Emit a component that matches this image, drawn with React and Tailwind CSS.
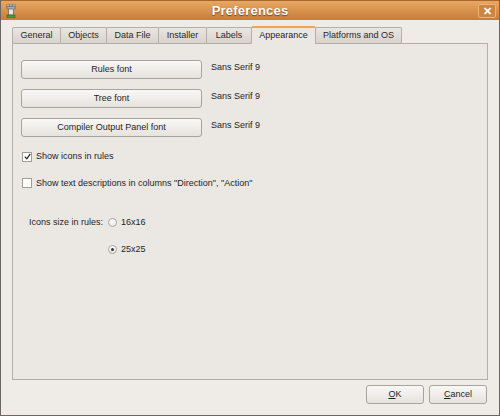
import React from "react";

const tabs = [
  { label: "General", w: "w-[49px]" },
  { label: "Objects", w: "w-[47px]" },
  { label: "Data File", w: "w-[53px]" },
  { label: "Installer", w: "w-[49px]" },
  { label: "Labels", w: "w-[46px]" },
  { label: "Appearance", w: "w-[65px]", active: true },
  { label: "Platforms and OS", w: "w-[87px]" },
];

const fontRows = ["Rules font", "Tree font", "Compiler Output Panel font"];

function Tower() {
  return (
    <svg width="10" height="14" viewBox="0 0 10 14">
      <rect x="1" y="0" width="2" height="3" fill="#d8d8d8" stroke="#555" strokeWidth="0.6" />
      <rect x="4" y="0" width="2" height="3" fill="#d8d8d8" stroke="#555" strokeWidth="0.6" />
      <rect x="7" y="0" width="2" height="3" fill="#d8d8d8" stroke="#555" strokeWidth="0.6" />
      <rect x="1" y="3" width="8" height="2" fill="#cfcfcf" stroke="#555" strokeWidth="0.6" />
      <rect x="2.5" y="5" width="5" height="6" fill="#e4e4e4" stroke="#555" strokeWidth="0.6" />
      <rect x="1" y="11" width="8" height="3" fill="#4e9a3a" stroke="#2f5e22" strokeWidth="0.6" />
    </svg>
  );
}

function Btn({ children, className = "" }) {
  return (
    <button
      className={`h-[19px] rounded-[3px] border border-[#a8a39d] bg-gradient-to-b from-[#f9f8f6] to-[#e6e2dd] text-[9px] text-[#1e1e1e] ${className}`}
    >
      {children}
    </button>
  );
}

export default function App() {
  return (
    <div
      className="w-[500px] h-[416px] flex flex-col bg-[#efebe7] border-x border-b border-[#6b6661] overflow-hidden"
      style={{ fontFamily: '"Liberation Sans", Arial, sans-serif' }}
    >
      {/* title bar */}
      <div className="h-[20px] shrink-0 relative flex items-center justify-center bg-gradient-to-b from-[#e7a864] to-[#c97c36] border-t border-[#a9662a]">
        <div className="absolute left-[5px] top-[3px]">
          <Tower />
        </div>
        <span className="text-[13px] font-bold text-white tracking-[0.2px] [text-shadow:0_1px_1px_#7a4414]">
          Preferences
        </span>
        <div className="absolute right-[3px] top-[3px] w-[18px] h-[14px] rounded-[2px] border border-[#e9b47c] bg-[#cf853f] flex items-center justify-center">
          <span className="text-[11px] font-bold text-white leading-none">✕</span>
        </div>
      </div>

      {/* body */}
      <div className="flex-1 flex flex-col px-[11px]">
        {/* tabs */}
        <div className="flex items-end h-[23px] pt-[6px]">
          {tabs.map((t) =>
            t.active ? (
              <div
                key={t.label}
                className={`${t.w} h-[18px] -mb-px -mr-px relative z-10 flex items-center justify-center bg-[#ebe7e3] border-x border-[#b3aea8] border-t-2 border-t-[#f2a455] rounded-t-[2px] text-[9px] text-[#1e1e1e]`}
              >
                {t.label}
              </div>
            ) : (
              <div
                key={t.label}
                className={`${t.w} h-[16px] flex items-center justify-center bg-gradient-to-b from-[#e9e5e0] to-[#d8d3cd] border border-b-0 border-[#b3aea8] rounded-t-[2px] text-[9px] text-[#2a2a2a] -mr-px`}
              >
                {t.label}
              </div>
            )
          )}
        </div>

        {/* panel */}
        <div className="h-[337px] border border-[#b3aea8] bg-[#ebe7e3] flex flex-col px-[8px] pt-[16px] text-[9px] text-[#1e1e1e]">
          <div className="flex flex-col gap-[10px]">
            {fontRows.map((r) => (
              <div key={r} className="flex items-center gap-[9px]">
                <Btn className="w-[181px]">{r}</Btn>
                <span className="-mt-[3px]">Sans Serif 9</span>
              </div>
            ))}
          </div>

          <div className="flex items-center gap-[4px] mt-[13px] pl-[1px]">
            <div className="w-[10px] h-[10px] border border-[#a29d97] bg-white flex items-center justify-center">
              <svg width="7" height="7" viewBox="0 0 7 7">
                <path d="M0.8 3.6 L2.8 5.8 L6.3 0.8" fill="none" stroke="#222" strokeWidth="1.2" />
              </svg>
            </div>
            <span>Show icons in rules</span>
          </div>

          <div className="flex items-center gap-[4px] mt-[13px] pl-[1px]">
            <div className="w-[10px] h-[10px] border border-[#a29d97] bg-white" />
            <span>Show text descriptions in columns "Direction", "Action"</span>
          </div>

          <div className="flex items-center mt-[26px] pl-[8px]">
            <span className="w-[79px]">Icons size in rules:</span>
            <div className="w-[9px] h-[9px] rounded-full border border-[#aaa5a0] bg-gradient-to-b from-white to-[#eeeae6]" />
            <span className="ml-[4px]">16x16</span>
          </div>

          <div className="flex items-center mt-[13px] pl-[87px]">
            <div className="w-[9px] h-[9px] rounded-full border border-[#aaa5a0] bg-gradient-to-b from-white to-[#e6e2de] flex items-center justify-center">
              <div className="w-[3px] h-[3px] rounded-full bg-[#333]" />
            </div>
            <span className="ml-[4px]">25x25</span>
          </div>
        </div>

        {/* bottom buttons */}
        <div className="flex justify-end gap-[5px] mt-[5px] pr-[1px]">
          <Btn className="w-[58px] border-[#55514d] border-[1.5px]">
            <span className="underline">O</span>K
          </Btn>
          <Btn className="w-[58px]">
            <span className="underline">C</span>ancel
          </Btn>
        </div>
      </div>
    </div>
  );
}
